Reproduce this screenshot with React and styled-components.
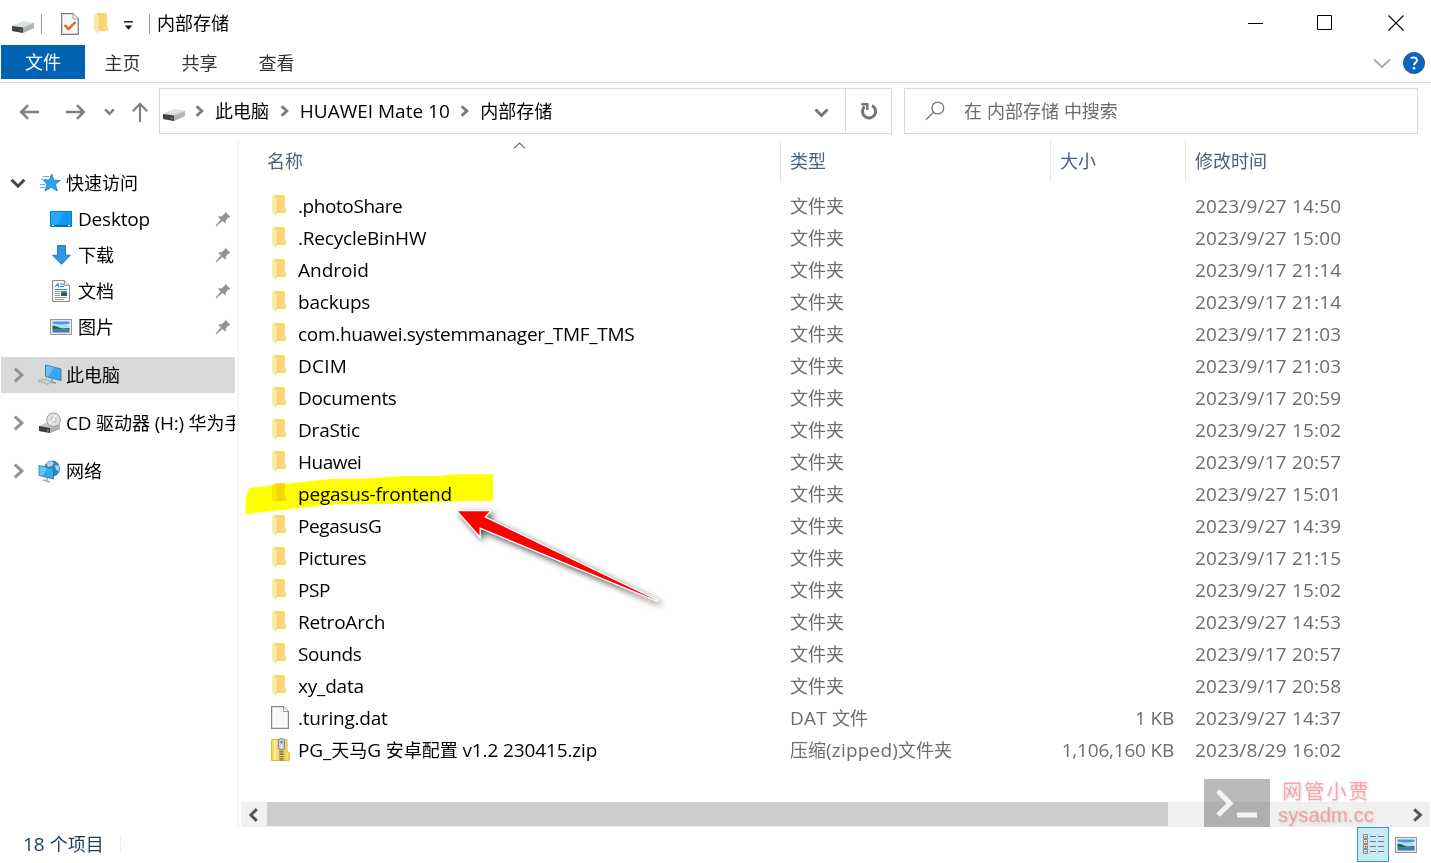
import React from "react";
import styled, { createGlobalStyle, css } from "styled-components";

const GlobalStyle = createGlobalStyle`
  * { box-sizing: border-box; }
  body { margin: 0; background: #fff; overflow: hidden; }
  svg { display: block; flex: none; }
`;

const Window = styled.div`
  position: relative;
  width: 1431px;
  height: 863px;
  display: flex;
  flex-direction: column;
  overflow: hidden;
  background: #fff;
  color: #000;
  font-family: "Noto Sans CJK SC", sans-serif;
  font-size: 18px;
  line-height: 24px;
  white-space: pre;
`;

const Latin = styled.span`
  font-family: "Open Sans", "Noto Sans", sans-serif;
  font-size: 19px;
  line-height: 0;
  letter-spacing: ${(p) => p.$ls}px;
`;

function Label({ children, ls = 0 }) {
  return children
    .split(/([\u0020-\u007e]+)/)
    .filter(Boolean)
    .map((part, i) =>
      /[\u0020-\u007e]/.test(part) ? <Latin key={i} $ls={ls}>{part}</Latin> : part
    );
}

/* ---------- title bar and ribbon ---------- */

const TitleBar = styled.header`
  height: 45px;
  display: flex;
  align-items: center;
  padding-left: 11px;
`;
const QuickTools = styled.div`
  display: flex;
  align-items: center;
  height: 100%;
  padding-top: 3px;
`;
const Slot = styled.span`
  display: flex;
  justify-content: ${(p) => p.$justify || "flex-start"};
  flex: none;
  width: ${(p) => p.$w}px;
  padding-top: ${(p) => p.$drop || 0}px;
`;
const Bar = styled.span`
  width: 1px;
  height: 20px;
  background: #999;
`;
const WindowTitle = styled.h1`
  margin: 0 0 2px 7px;
  font-size: 18px;
  font-weight: 400;
`;
const WindowButtons = styled.div`
  display: flex;
  margin-left: auto;
  height: 100%;
`;
const WindowButton = styled.span`
  width: 70px;
  display: flex;
  align-items: center;
  justify-content: center;
`;

const Ribbon = styled.nav`
  height: 38px;
  display: flex;
  align-items: flex-start;
  border-bottom: 1px solid #d9d9d9;
  padding-left: 1px;
`;
const Tab = styled.span`
  height: 34px;
  width: ${(p) => (p.$active ? 84 : 77)}px;
  display: flex;
  align-items: center;
  justify-content: center;
  color: ${(p) => (p.$active ? "#fff" : "#333")};
  background: ${(p) => (p.$active ? "#0063b1" : "transparent")};
  padding: ${(p) => (p.$active ? "0 0 2px" : "0 2px 0 0")};
`;
const RibbonEnd = styled.div`
  margin: 7px 6px 0 auto;
  display: flex;
  align-items: center;
  gap: 12px;
`;

/* ---------- address bar ---------- */

const AddressRow = styled.div`
  display: flex;
  align-items: center;
  height: 56px;
  padding: 0 13px 0 19px;
`;
const NavArrows = styled.div`
  display: flex;
  align-items: center;
  width: 140px;
  padding-top: 1px;
`;
const Box = styled.div`
  height: 46px;
  border: 1px solid #d9d9d9;
  display: flex;
  align-items: center;
  width: ${(p) => p.$w}px;
`;
const AddressBox = styled(Box)`
  padding-left: 2px;
`;
const Crumb = styled.span`
  margin-bottom: 3px;
  width: ${(p) => p.$w}px;
`;
const RefreshButton = styled.span`
  width: 46px;
  height: 44px;
  border-left: 1px solid #d9d9d9;
  display: flex;
  align-items: center;
  justify-content: center;
`;
const SearchBox = styled(Box)`
  margin-left: 12px;
  padding-left: 20px;
  color: #6d6d6d;
`;
const SearchHint = styled.span`
  margin-bottom: 2px;
`;

/* ---------- body ---------- */

const Body = styled.main`
  flex: 1;
  min-height: 0;
  display: flex;
`;
const Sidebar = styled.aside`
  width: 239px;
  border-right: 2px solid #f7f7f7;
  padding: 26px 2px 0 1px;
`;
const NavItem = styled.div`
  height: 36px;
  display: flex;
  align-items: center;
  overflow: hidden;
  margin-bottom: ${(p) => (p.$spaced ? 12 : 0)}px;
  background: ${(p) => (p.$selected ? "#d9d9d9" : "transparent")};
  padding-left: ${(p) => (p.$child ? 48 : 9)}px;
`;
const NavLabel = styled.span`
  flex: 1;
  min-width: 0;
  overflow: hidden;
  line-height: 30px;
  margin-bottom: 2px;
`;
const Main = styled.section`
  flex: 1;
  min-width: 0;
  display: flex;
  flex-direction: column;
`;
const columns = css`
  display: grid;
  grid-template-columns: 542px 270px 135px 1fr;
`;
const SortMark = styled.span`
  position: absolute;
  left: 274px;
  top: 3px;
`;
const HeaderRow = styled.div`
  ${columns}
  position: relative;
  height: 50px;
  padding-top: 2px;
  color: #4c607a;
`;
const HeaderCell = styled.span`
  height: 41px;
  display: flex;
  align-items: center;
  border-right: ${(p) => (p.$last ? 0 : 1)}px solid #e5e5e5;
  padding: 0 0 3px ${(p) => (p.$first ? 28 : 9)}px;
`;
const FileRow = styled.div`
  ${columns}
  height: 32px;
  align-items: center;
  color: #6d6d6d;
`;
const NameCell = styled.span`
  display: flex;
  align-items: center;
  padding-left: 31px;
  color: #000;
`;
const FileGlyph = styled.span`
  width: 28px;
  padding-left: ${(p) => (p.$folder ? 2 : 1)}px;
  padding-top: ${(p) => (p.$folder ? 1 : 0)}px;
`;
const Cell = styled.span`
  padding: 0 12px 0 9px;
  text-align: ${(p) => (p.$end ? "right" : "left")};
`;
const ScrollBar = styled.div`
  margin: auto 0 0 2px;
  height: 25px;
  background: #f0f0f0;
  display: flex;
  width: 1189px;
`;
const ScrollButton = styled.span`
  width: 26px;
  display: flex;
  align-items: center;
  justify-content: center;
`;
const ScrollTrack = styled.span`
  flex: 1;
`;
const ScrollThumb = styled.span`
  display: block;
  width: 901px;
  height: 24px;
  background: #cdcdcd;
`;

const StatusBar = styled.footer`
  height: 36px;
  display: flex;
  align-items: flex-start;
  padding: 0 14px 0 23px;
  color: #1e395b;
`;
const Count = styled.span`
  width: 98px;
  height: 17px;
  line-height: 16px;
  margin-top: 8px;
  border-right: 1px solid #eee;
`;
const ViewModes = styled.div`
  margin-left: auto;
  display: flex;
  gap: 6px;
  align-items: center;
`;
const ViewButton = styled.span`
  width: 32px;
  height: 35px;
  display: flex;
  align-items: center;
  justify-content: center;
  border: 1px solid #2f9fdb;
  background: #cbe8f6;
`;

/* ---------- overlays ---------- */

const Annotation = styled.svg`
  position: absolute;
  left: 0;
  top: 0;
  pointer-events: none;
  mix-blend-mode: ${(p) => p.$blend || "normal"};
`;
const Watermark = styled.div`
  position: absolute;
  left: 1204px;
  top: 779px;
  display: flex;
`;
const WatermarkLogo = styled.span`
  width: 66px;
  height: 48px;
  background: rgba(0, 0, 0, 0.27);
`;
const WatermarkText = styled.span`
  display: flex;
  flex-direction: column;
  padding-left: 8px;
  color: rgba(250, 110, 110, 0.55);
  text-shadow: 1px 1px 3px rgba(120, 60, 60, 0.22);
`;
const WatermarkName = styled.span`
  font-size: 20px;
  letter-spacing: 2.2px;
  line-height: 24px;
  padding-left: 4px;
`;
const WatermarkSite = styled.span`
  font-family: "Liberation Sans", sans-serif;
  font-size: 20px;
  line-height: 24px;
  letter-spacing: 0.15px;
`;

/* ---------- icons ---------- */

const Chevron = ({ dir = "right", size = 10, color = "#7a7a7a", w = 2.4 }) => {
  const d = { right: "M3 1 7.4 5 3 9", left: "M7 .8 2.8 5 7 9.2", down: "M1 3 5 7 9 3", up: "M1 7 5 3 9 7" }[dir];
  return (
    <svg width={size} height={size} viewBox="0 0 10 10" fill="none" stroke={color} strokeWidth={(w * 10) / size}>
      <path d={d} />
    </svg>
  );
};

const DriveIcon = () => (
  <svg width="24" height="14" viewBox="0 0 24 14">
    <path d="M1 6 12 1.5 23 3 23 8 12 13 1 11Z" fill="#c9cacb" />
    <path d="M1 6 12 1.5 23 3 12 7.5Z" fill="#dedfe0" />
    <path d="M12 7.5 23 3V8L12 13Z" fill="#b3b4b6" />
    <path d="M1 6 12 7.5V13L1 11Z" fill="#404342" />
    <path d="M8.5 9.5h2v1.3h-2z" fill="#3cb54a" />
  </svg>
);

const FolderIcon = () => (
  <svg width="15" height="22" viewBox="0 0 15 22">
    <path d="M4 0H13V13L14 14V18H4Z" fill="#f7d470" />
    <path d="M10 0H13V13L14 14V18H10Z" fill="#f9d978" />
    <path d="M0 1 2 .2 4.8 4V21.5L0 17Z" fill="#fce8a6" />
    <path d="M2 0H4.5L4.8 4Z" fill="#f3cf6c" />
  </svg>
);

const CheckPage = () => (
  <svg width="18" height="22" viewBox="0 0 18 22">
    <path d="M.7.7H12L17.3 6V21.3H.7Z" fill="#f8f9fb" stroke="#777" strokeWidth="1.2" />
    <path d="M12 .7V6h5.3" fill="#fff" stroke="#999" />
    <path d="m3.5 12 4 4L14.5 9" fill="none" stroke="#f2600c" strokeWidth="2.4" />
  </svg>
);

const PageIcon = () => (
  <svg width="18" height="23" viewBox="0 0 18 23">
    <path d="M.6.6H12.5L17.4 5.5V22.4H.6Z" fill="#f8f9fa" stroke="#858585" strokeWidth="1.2" />
    <path d="M12.5.6V5.5h4.9" fill="#fff" stroke="#999" />
  </svg>
);

const ZipIcon = () => (
  <svg width="19" height="23" viewBox="0 0 19 23">
    <path d="M.6 1.5H16V13l2.3 2V22.4H.6Z" fill="#f6dc6d" stroke="#dfb52e" />
    <path d="M4 2V22" stroke="#fff0a5" strokeWidth="2" />
    <path d="M13.5 2V22" stroke="#f0ca48" strokeWidth="2" />
    <path d="M10.5 11V23" stroke="#6b6444" strokeWidth="4" strokeDasharray="1.3 1" />
    <path d="M9 11v12" stroke="#9c9675" strokeWidth="1.5" strokeDasharray="1 1.3" />
    <rect x="7.4" y=".6" width="6" height="11" rx="2" fill="#c6d0d6" stroke="#7c8589" />
    <path d="M9.5 3.2h2v2h-2z" fill="#63717a" />
    <path d="M10.5 6.5v3" stroke="#fff" />
  </svg>
);

const StarIcon = () => (
  <svg width="21" height="20" viewBox="0 0 21 20">
    <path d="M11.8 1 13.8 7.2 20.3 7.4 15.4 11.3 17.4 18 11.3 14.3 5 18 7 11.4 3.8 7.3 9.3 7Z" fill="#2aa4ee" stroke="#1379c0" strokeWidth=".8" />
    <path d="M3 3.5h6M1 6.5h6M0 11.5h5M0 14.5h5" stroke="#58b5ec" strokeWidth="1.1" />
  </svg>
);

const DesktopIcon = () => (
  <svg width="22" height="16" viewBox="0 0 22 16">
    <path d="M.5.5h21v15H.5z" fill="#1099f4" stroke="#087ac8" />
    <path d="M14 1 7 14H1V1Z" fill="#27a7fa" />
    <path d="M1 14.5h20" stroke="#075c99" />
    <path d="M2 14.5h2M18 14.5h2" stroke="#fff" />
  </svg>
);

const DownloadIcon = () => (
  <svg width="19" height="20" viewBox="0 0 19 20">
    <path d="M5.6.6h7.8v9.6h4.9L9.5 19.3.7 10.2h4.9Z" fill="#3594e8" stroke="#1976c7" />
  </svg>
);

const DocIcon = () => (
  <svg width="18" height="22" viewBox="0 0 18 22">
    <path d="M.6.6H12.5L17.4 5.5V21.4H.6Z" fill="#fff" stroke="#808080" />
    <path d="M12.5.6V5.5h4.9" fill="#eee" stroke="#999" />
    <path d="m3 7 3-4 .5 4M4.5 5.5h2M8 4h4M8 6.5h4" fill="none" stroke="#1686d0" />
    <path d="M3 9.5h12" stroke="#1686d0" />
    <path d="M3 11.5h5M3 13.5h5M3 15.5h5M3 17.5h12M3 19.5h9" stroke="#999" />
    <path d="M9 11h6v5H9z" fill="#3587b2" />
    <path d="M9 14l3-1.5 3 1.5v2H9z" fill="#36584f" />
  </svg>
);

const PhotoIcon = () => (
  <svg width="22" height="16" viewBox="0 0 22 16">
    <path d="M.6.6h20.8v14.8H.6z" fill="#fff" stroke="#999" strokeWidth="1.2" />
    <path d="M2.5 2.5h17v11h-17z" fill="#b4dcf7" />
    <path d="M2.5 2.5h17v2.3L10 5.5 2.5 4.5Z" fill="#4f94df" />
    <path d="M2.5 6.5c4 0 6 2.5 10 3l7-.6v1.6h-17z" fill="#29624b" />
    <path d="M2.5 10.2h17v3.3h-17z" fill="#3f7da6" />
  </svg>
);

const ComputerIcon = () => (
  <svg width="24" height="22" viewBox="0 0 24 22">
    <path d="M7.5 1 23 5V16.5L7.5 12.5Z" fill="#2fa9f7" stroke="#55707f" strokeWidth=".9" />
    <path d="M8 1.5 16 3.7 10 12.7 8 12.2Z" fill="#63c3fb" />
    <path d="M14 15v2.5M11 18l7 1" stroke="#8799a5" strokeWidth="1.5" />
    <path d="m1 17 5-2 8 2.5-4 2.5Z" fill="none" stroke="#9fb4c2" strokeWidth="2" strokeDasharray="2 1" />
  </svg>
);

const CdIcon = () => (
  <svg width="24" height="22" viewBox="0 0 24 22">
    <path d="M1 14 10 10 22 12V17L12 21 1 19Z" fill="#c5c6c7" />
    <path d="M1 14 12 16V21L1 19Z" fill="#3e403f" />
    <path d="M12 16 22 12.5V17L12 21Z" fill="#aeb0b1" />
    <circle cx="15.5" cy="7.8" r="6.8" fill="#e1e2e2" stroke="#999" />
    <circle cx="15.5" cy="7.8" r="2.5" fill="#f6f6f6" stroke="#aaa" />
    <path d="m11 12 4-4 3-5" stroke="#fff" fill="none" />
    <path d="M9 17.7h2v1.5H9z" fill="#42ad4b" />
  </svg>
);

const NetworkIcon = () => (
  <svg width="23" height="23" viewBox="0 0 23 23">
    <circle cx="14" cy="8.500" r="8" fill="#3187b8" />
    <path d="m8 3 5-2 3 2-2 3-4 1ZM17 5l4 1v5l-3-1Z" fill="#a8d8ea" />
    <path d="M1 5.500 15.500 8.800V19L1 15.500Z" fill="#31aaf6" stroke="#376a88" strokeWidth=".8" />
    <path d="M1.500 6 9 7.800 5 16 1.500 15.200Z" fill="#62c4fb" />
    <path d="M9 18v2.500M5 20l7 2" stroke="#9faeb7" strokeWidth="1.500" />
  </svg>
);

const PinIcon = () => (
  <svg width="16" height="16" viewBox="0 0 16 16">
    <path d="M10 .5 15.500 6 13.400 6.400 10.800 9.400 10.600 12.800 7.400 10 1.200 15.500.5 14.800 5.800 8.500 2.800 5.500 6.600 5.200 9.800 2.500Z" fill="#8c969f" />
  </svg>
);

const ArrowIcon = ({ flip }) => (
  <svg width="21" height="18" viewBox="0 0 21 18" fill="none" stroke="#808080" strokeWidth="2.600" transform={flip ? "scale(-1 1)" : undefined}>
    <path d="M20 9H3M9 2.200 2.300 9 9 15.800" />
  </svg>
);

/* ---------- data ---------- */

const folders = [
  [".photoShare", "2023/9/27 14:50", -0.42],
  [".RecycleBinHW", "2023/9/27 15:00", -0.2],
  ["Android", "2023/9/17 21:14", 0],
  ["backups", "2023/9/17 21:14", -0.2],
  ["com.huawei.systemmanager_TMF_TMS", "2023/9/17 21:03", -0.3],
  ["DCIM", "2023/9/17 21:03", 0.25],
  ["Documents", "2023/9/17 20:59", -0.35],
  ["DraStic", "2023/9/27 15:02", -0.2],
  ["Huawei", "2023/9/17 20:57", -0.5],
  ["pegasus-frontend", "2023/9/27 15:01", -0.2],
  ["PegasusG", "2023/9/27 14:39", -0.4],
  ["Pictures", "2023/9/17 21:15", -0.4],
  ["PSP", "2023/9/27 15:02", -0.4],
  ["RetroArch", "2023/9/27 14:53", -0.2],
  ["Sounds", "2023/9/17 20:57", -0.4],
  ["xy_data", "2023/9/17 20:58", -0.2],
];
const files = [
  ...folders.map(([name, date, ls]) => ({ name, date, ls, type: "文件夹", size: "", Icon: FolderIcon })),
  { name: ".turing.dat", date: "2023/9/27 14:37", ls: -0.2, type: "DAT 文件", size: "1 KB", Icon: PageIcon },
  { name: "PG_天马G 安卓配置 v1.2 230415.zip", date: "2023/8/29 16:02", ls: -0.13, type: "压缩(zipped)文件夹", size: "1,106,160 KB", Icon: ZipIcon },
];
const quickLinks = [
  ["Desktop", DesktopIcon],
  ["下载", DownloadIcon],
  ["文档", DocIcon],
  ["图片", PhotoIcon],
];
const roots = [
  ["此电脑", ComputerIcon, true],
  ["CD 驱动器 (H:) 华为手", CdIcon, false],
  ["网络", NetworkIcon, false],
];

export default function App() {
  return (
    <Window>
      <GlobalStyle />
      <TitleBar>
        <QuickTools>
          <Slot $w={30} $drop={6}><DriveIcon /></Slot>
          <Bar />
          <Slot $w={19} />
          <Slot $w={33}><CheckPage /></Slot>
          <Slot $w={29}><FolderIcon /></Slot>
          <Slot $w={26} $drop={4}>
            <svg width="11" height="10" viewBox="0 0 11 10"><path d="M1 .8h9" stroke="#111" strokeWidth="1.400" /><path d="M1.800 4.500h7.400L5.500 8.800Z" fill="#111" /></svg>
          </Slot>
          <Bar />
        </QuickTools>
        <WindowTitle>内部存储</WindowTitle>
        <WindowButtons>
          <WindowButton><svg width="16" height="16"><path d="M0 8.500h15" stroke="#000" /></svg></WindowButton>
          <WindowButton><svg width="18" height="16"><path d="M.5.5h14v14H.5z" fill="none" stroke="#000" /></svg></WindowButton>
          <WindowButton><svg width="17" height="16"><path d="M.5.5 15.500 15.500M15.500.5.5 15.500" stroke="#000" strokeWidth="1.100" /></svg></WindowButton>
        </WindowButtons>
      </TitleBar>
      <Ribbon>
        <Tab $active>文件</Tab>
        <Tab>主页</Tab>
        <Tab>共享</Tab>
        <Tab>查看</Tab>
        <RibbonEnd>
          <svg width="18" height="11" viewBox="0 0 18 11"><path d="m1 1.500 8 7.500 8-7.500" fill="none" stroke="#a6a6a6" strokeWidth="1.800" /></svg>
          <svg width="22" height="22" viewBox="0 0 22 22">
            <circle cx="11" cy="11" r="10.600" fill="#0b64c0" stroke="#174f8c" strokeWidth=".8" />
            <path d="M7.800 6.400C9 5.300 14 4.800 14 8.200c0 2.500-3 2.600-3 5" fill="none" stroke="#fff" strokeWidth="1.900" />
            <circle cx="11" cy="16.200" r="1.300" fill="#fff" />
          </svg>
        </RibbonEnd>
      </Ribbon>
      <AddressRow>
        <NavArrows>
          <Slot $w={46}><ArrowIcon /></Slot>
          <Slot $w={39}><ArrowIcon flip /></Slot>
          <Slot $w={28}><Chevron dir="down" size={11} color="#808080" w={2.4} /></Slot>
          <svg width="17" height="20" viewBox="0 0 17 20" fill="none" stroke="#808080" strokeWidth="2.100"><path d="M8 20V2M.8 9.300 8 1.800 15.200 9.300" /></svg>
        </NavArrows>
        <AddressBox $w={733}>
          <Slot $w={31} $drop={8}><DriveIcon /></Slot>
          <Slot $w={22}><Chevron size={12} w={2.8} /></Slot>
          <Crumb $w={63}>此电脑</Crumb>
          <Slot $w={22}><Chevron size={12} w={2.8} /></Slot>
          <Crumb $w={159}><Label>HUAWEI Mate 10</Label></Crumb>
          <Slot $w={22}><Chevron size={12} w={2.8} /></Slot>
          <Crumb $w={335}>内部存储</Crumb>
          <Slot $w={31} $drop={2}><Chevron dir="down" size={15} w={3} color="#777" /></Slot>
          <RefreshButton>
            <svg width="18" height="18" viewBox="0 0 18 18" fill="none" stroke="#757575" strokeWidth="3">
              <path d="M12 3.500A6.600 6.600 0 1 1 4.500 4.600" />
              <path d="M1.500 2.200H7.300V8" strokeWidth="2.400" />
            </svg>
          </RefreshButton>
        </AddressBox>
        <SearchBox $w={514}>
          <Slot $w={39}>
            <svg width="20" height="20" viewBox="0 0 20 20" fill="none" stroke="#777" strokeWidth="1.300"><circle cx="12.800" cy="7" r="5.900" /><path d="m8.600 11.200-7.600 7.600" /></svg>
          </Slot>
          <SearchHint><Label>在 内部存储 中搜索</Label></SearchHint>
        </SearchBox>
      </AddressRow>
      <Body>
        <Sidebar>
          <NavItem>
            <Slot $w={30}><Chevron dir="down" size={16} color="#444" w={3} /></Slot>
            <Slot $w={26}><StarIcon /></Slot>
            <NavLabel>快速访问</NavLabel>
          </NavItem>
          {quickLinks.map(([text, Icon], i) => (
            <NavItem key={text} $child $spaced={i === 3}>
              <Slot $w={24} $justify="center"><Icon /></Slot>
              <Slot $w={5} />
              <NavLabel><Label ls={-0.2}>{text}</Label></NavLabel>
              <Slot $w={20}><PinIcon /></Slot>
            </NavItem>
          ))}
          {roots.map(([text, Icon, selected]) => (
            <NavItem key={text} $spaced $selected={selected}>
              <Slot $w={28}><Chevron size={16} color="#929292" w={3} /></Slot>
              <Slot $w={28}><Icon /></Slot>
              <NavLabel><Label ls={-0.25}>{text}</Label></NavLabel>
            </NavItem>
          ))}
        </Sidebar>
        <Main>
          <HeaderRow>
            <HeaderCell $first>名称</HeaderCell>
            <HeaderCell>类型</HeaderCell>
            <HeaderCell>大小</HeaderCell>
            <HeaderCell $last>修改时间</HeaderCell>
            <SortMark><svg width="13" height="7" viewBox="0 0 13 7"><path d="M1 6.300 6.500 1 12 6.300" fill="none" stroke="#666" strokeWidth="1.100" /></svg></SortMark>
          </HeaderRow>
          {files.map(({ name, date, ls, type, size, Icon }) => (
            <FileRow key={name}>
              <NameCell>
                <FileGlyph $folder={Icon === FolderIcon}><Icon /></FileGlyph>
                <span><Label ls={ls}>{name}</Label></span>
              </NameCell>
              <Cell><Label ls={0.2}>{type}</Label></Cell>
              <Cell $end><Label ls={-0.2}>{size}</Label></Cell>
              <Cell><Label ls={0.2}>{date}</Label></Cell>
            </FileRow>
          ))}
          <ScrollBar>
            <ScrollButton><Chevron dir="left" size={14} color="#555" w={3} /></ScrollButton>
            <ScrollTrack><ScrollThumb /></ScrollTrack>
            <ScrollButton><Chevron size={14} color="#555" w={3} /></ScrollButton>
          </ScrollBar>
        </Main>
      </Body>
      <StatusBar>
        <Count><Label>18 个项目</Label></Count>
        <ViewModes>
          <ViewButton>
            <svg width="21" height="21" viewBox="0 0 21 21">
              {["#4a7ebb", "#a98a3c", "#c0392b", "#888"].map((c, i) => (
                <g key={c}>
                  <path d={`M.5 ${i * 5 + 0.5}h4v4h-4z`} fill="#fff" stroke="#888" />
                  <path d={`M1.700 ${i * 5 + 1.7}h1.800v1.800H1.700z`} fill={c} />
                  <path d={`M7 ${i * 5 + 2.5}h6M15 ${i * 5 + 2.5}h6`} stroke="#777" />
                </g>
              ))}
            </svg>
          </ViewButton>
          <PhotoIcon />
        </ViewModes>
      </StatusBar>

      <Annotation width="1431" height="863" $blend="multiply">
        <path d="M249 488 283 484 330 479 367 478.500 403 476H437L457 474.300H493V501H460L407 503.500 330 504.500 283 510 245.500 514V499Z" fill="#ff0" />
      </Annotation>
      <Annotation width="1431" height="863">
        <defs>
          <filter id="shade" x="-10%" y="-20%" width="125%" height="150%">
            <feDropShadow dx="3" dy="3" stdDeviation="3" floodColor="#000" floodOpacity=".7" />
          </filter>
        </defs>
        <path d="M458 511.300H489.500L484.300 517.300 658 601 479.500 527.300V535.500Z" fill="#f00" stroke="#fff" strokeWidth="2.200" paintOrder="stroke" filter="url(#shade)" />
      </Annotation>
      <Watermark>
        <WatermarkLogo>
          <svg width="66" height="48" viewBox="0 0 66 48" fill="none" stroke="#f4f4f4">
            <path d="m14 12 12 12.500L14 36" strokeWidth="5" />
            <path d="M33 36H53" strokeWidth="5" />
          </svg>
        </WatermarkLogo>
        <WatermarkText>
          <WatermarkName>网管小贾</WatermarkName>
          <WatermarkSite>sysadm.cc</WatermarkSite>
        </WatermarkText>
      </Watermark>
    </Window>
  );
}
